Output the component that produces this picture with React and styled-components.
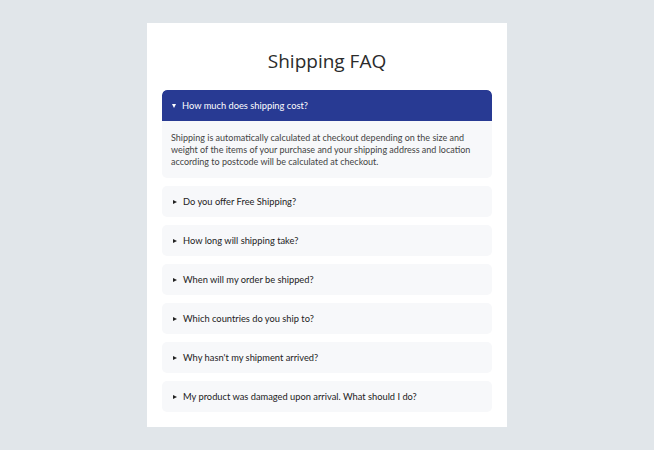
import styled, { createGlobalStyle } from "styled-components";

const GlobalStyle = createGlobalStyle`
  body {
    margin: 0;
    background: #e1e6ea;
    font-family: "Open Sans", "Liberation Sans", sans-serif;
  }
`;

const faqs = [
  {
    q: "How much does shipping cost?",
    a: "Shipping is automatically calculated at checkout depending on the size and weight of the items of your purchase and your shipping address and location according to postcode will be calculated at checkout.",
  },
  { q: "Do you offer Free Shipping?" },
  { q: "How long will shipping take?" },
  { q: "When will my order be shipped?" },
  { q: "Which countries do you ship to?" },
  { q: "Why hasn't my shipment arrived?" },
  { q: "My product was damaged upon arrival. What should I do?" },
];

const App = () => {
  return (
    <>
      <GlobalStyle />
      <Page>
        <Card>
          <Title>Shipping FAQ</Title>
          <List>
            {faqs.map((f, i) => (
              <Item key={f.q}>
                <Question open={i === 0}>
                  <Caret open={i === 0} />
                  {f.q}
                </Question>
                {i === 0 && <Answer>{f.a}</Answer>}
              </Item>
            ))}
          </List>
        </Card>
      </Page>
    </>
  );
};

export default App;

/* ---------------------------- Styled Components --------------------------- */

const Page = styled.main`
  min-height: 450px;
  padding-top: 23px;
  box-sizing: border-box;
  display: flex;
  justify-content: center;
  align-items: flex-start;
`;

const Card = styled.section`
  width: 360px;
  background: #fff;
  padding: 0 15px 15px;
  box-sizing: border-box;
`;

const Title = styled.h1`
  margin: 0;
  padding: 25px 0 15px;
  text-align: center;
  font-size: 19px;
  font-weight: 400;
  line-height: 27px;
  color: #2b2b2b;
`;

const List = styled.div`
  display: flex;
  flex-direction: column;
  gap: 8px;
`;

const Item = styled.div`
  background: #f7f8fa;
  border-radius: 5px;
  overflow: hidden;
`;

const Question = styled.div`
  height: 31px;
  display: flex;
  align-items: center;
  padding-left: 10px;
  font-family: "Lato", "Noto Sans", sans-serif;
  font-size: 9.3px;
  color: ${p => (p.open ? "#fff" : "#222")};
  background: ${p => (p.open ? "#283a93" : "transparent")};
  border-radius: ${p => (p.open ? "5px 5px 0 0" : "0")};
`;

const Caret = styled.span`
  width: 0;
  height: 0;
  margin-right: 6px;
  ${p =>
    p.open
      ? `
    border-left: 2.5px solid transparent;
    border-right: 2.5px solid transparent;
    border-top: 4px solid #fff;
  `
      : `
    border-top: 2.5px solid transparent;
    border-bottom: 2.5px solid transparent;
    border-left: 4px solid #222;
    margin-left: 1px;
  `}
`;

const Answer = styled.p`
  margin: 0;
  padding: 11px 9px 10px;
  font-family: "Lato", "Noto Sans", sans-serif;
  font-size: 9px;
  line-height: 12px;
  color: #444;
`;
